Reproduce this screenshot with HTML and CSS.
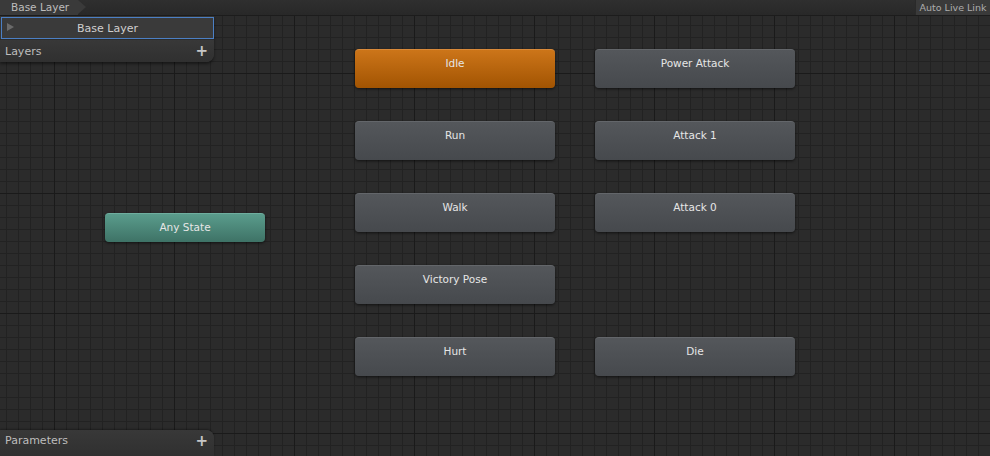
FILE: index.html
```html
<!DOCTYPE html>
<html>
<head>
<meta charset="utf-8">
<link rel="stylesheet" href="styles.css">
</head>
<body>
<div class="window">
  <div class="toolbar">
    <div class="crumb">Base Layer</div>
    <div class="spacer"></div>
    <div class="live">Auto Live Link</div>
  </div>
  <div class="canvas">
    <div class="layers-panel">
      <div class="layer-row"><span class="tri"></span><span class="layer-name">Base Layer</span></div>
      <div class="panel-head"><span>Layers</span><span class="plus">+</span></div>
    </div>

    <div class="node state default" style="left:355px;top:33px"><span>Idle</span></div>
    <div class="node state" style="left:595px;top:33px"><span>Power Attack</span></div>
    <div class="node state" style="left:355px;top:105px"><span>Run</span></div>
    <div class="node state" style="left:595px;top:105px"><span>Attack 1</span></div>
    <div class="node state" style="left:355px;top:177px"><span>Walk</span></div>
    <div class="node state" style="left:595px;top:177px"><span>Attack 0</span></div>
    <div class="node state" style="left:355px;top:249px"><span>Victory Pose</span></div>
    <div class="node state" style="left:355px;top:321px"><span>Hurt</span></div>
    <div class="node state" style="left:595px;top:321px"><span>Die</span></div>
    <div class="node any" style="left:105px;top:197px"><span>Any State</span></div>

    <div class="params-panel">
      <div class="panel-head"><span>Parameters</span><span class="plus">+</span></div>
    </div>
  </div>
</div>
</body>
</html>
```
FILE: styles.css
```css
html, body {
  margin: 0;
  padding: 0;
  width: 990px;
  height: 456px;
  overflow: hidden;
  background: #2a2a2a;
  font-family: "DejaVu Sans", "Liberation Sans", sans-serif;
}
.window {
  width: 990px;
  height: 456px;
  display: flex;
  flex-direction: column;
}
.toolbar {
  height: 15px;
  flex: none;
  display: flex;
  align-items: stretch;
  background: linear-gradient(#2f2f2f, #282828);
  border-bottom: 1px solid #1c1c1c;
  font-size: 10.5px;
  color: #bdbdbd;
}
.crumb {
  position: relative;
  padding: 0 6px 0 11px;
  line-height: 15px;
  background: #3a3a3a;
  width: 61px;
}
.crumb::after {
  content: "";
  position: absolute;
  right: -8px;
  top: 0;
  border-left: 8px solid #3a3a3a;
  border-top: 7.5px solid transparent;
  border-bottom: 7.5px solid transparent;
}
.spacer { flex: 1; }
.live {
  width: 74px;
  background: #3a3a3a;
  line-height: 15px;
  text-align: center;
  font-size: 9.5px;
  color: #adadad;
  border-left: 1px solid #2a2a2a;
}
.canvas {
  position: relative;
  flex: 1;
  background-color: #2b2b2b;
  background-image:
    linear-gradient(to right, #1a1a1a 1px, transparent 1px),
    linear-gradient(to bottom, #1a1a1a 1px, transparent 1px),
    linear-gradient(to right, #222222 1px, transparent 1px),
    linear-gradient(to bottom, #222222 1px, transparent 1px);
  background-size: 120px 120px, 120px 120px, 12px 12px, 12px 12px;
  background-position: 54px 57px, 54px 57px, 6px 9px, 6px 9px;
}
.layers-panel {
  position: absolute;
  left: 0;
  top: 0;
  width: 214px;
  background: #353535;
  border-bottom-right-radius: 8px;
  box-shadow: 0 2px 3px rgba(0,0,0,0.45);
}
.layer-row {
  position: relative;
  height: 20px;
  margin: 1px 0 0 1px;
  border: 1px solid #4b7fc4;
  background: #3a3a3a;
  display: flex;
  align-items: center;
  justify-content: center;
  font-size: 11px;
  color: #cfcfcf;
}
.tri {
  position: absolute;
  left: 5px;
  top: 5px;
  border-left: 7px solid #6a6a6a;
  border-top: 4.5px solid transparent;
  border-bottom: 4.5px solid transparent;
}
.panel-head {
  height: 22px;
  display: flex;
  align-items: center;
  justify-content: space-between;
  padding: 0 6px 0 5px;
  font-size: 11px;
  color: #bdbdbd;
  background: linear-gradient(#383838, #303030);
}
.layers-panel .panel-head {
  border-bottom-right-radius: 8px;
  border-top: 1px solid #2c2c2c;
}
.plus {
  font-size: 15px;
  font-weight: bold;
  color: #c6c6c6;
  line-height: 1;
}
.params-panel {
  position: absolute;
  left: 0;
  bottom: 0;
  width: 214px;
  background: #353535;
  border-top-right-radius: 8px;
  box-shadow: 0 -1px 2px rgba(0,0,0,0.35);
}
.params-panel .panel-head {
  height: 26px;
  border-top-right-radius: 8px;
  align-items: flex-start;
  padding-top: 4px;
  box-sizing: border-box;
}
.node {
  position: absolute;
  box-sizing: border-box;
  border-radius: 4px;
  font-size: 10.5px;
  color: #e6e6e6;
  text-align: center;
  box-shadow: 0 1px 3px rgba(0,0,0,0.6);
}
.state {
  width: 200px;
  height: 39px;
  padding-top: 6px;
  line-height: 14px;
  background: linear-gradient(#54575b, #46494d);
  border-top: 1px solid #63666a;
}
.default {
  background: linear-gradient(#cc7519, #a25402);
  border-top: 1px solid #d98a3a;
}
.any {
  width: 160px;
  height: 29px;
  line-height: 27px;
  background: linear-gradient(#5a9c8c, #3e7266);
  border-top: 1px solid #6fae9f;
}
```
